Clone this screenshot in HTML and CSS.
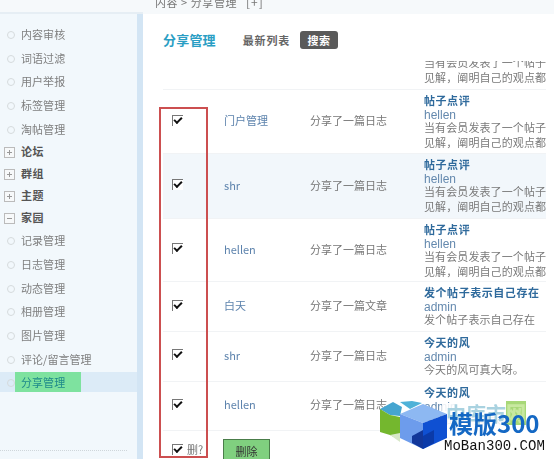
FILE: index.html
```html
<!DOCTYPE html>
<html lang="zh">
<head>
<meta charset="utf-8">
<title>分享管理</title>
<link rel="stylesheet" href="styles.css">
</head>
<body>
<div class="page">
  <aside class="side">
    <div class="side-top"></div>
    <nav class="menu">
      <a class="item">内容审核</a>
      <a class="item">词语过滤</a>
      <a class="item">用户举报</a>
      <a class="item">标签管理</a>
      <a class="item">淘帖管理</a>
      <a class="group"><i class="box plus"></i>论坛</a>
      <a class="group"><i class="box plus"></i>群组</a>
      <a class="group"><i class="box plus"></i>主题</a>
      <a class="group"><i class="box"></i>家园</a>
      <a class="item">记录管理</a>
      <a class="item">日志管理</a>
      <a class="item">动态管理</a>
      <a class="item">相册管理</a>
      <a class="item">图片管理</a>
      <a class="item">评论/留言管理</a>
      <a class="item active"><span class="mark">分享管理</span></a>
    </nav>
    <div class="dots"></div>
  </aside>
  <main class="main">
    <div class="crumb"><span>内容 &gt; 分享管理</span><span class="crumb-add">[+]</span></div>
    <header class="tabs">
      <h1 class="tab-title">分享管理</h1>
      <span class="tab">最新列表</span>
      <span class="tab-on">搜索</span>
    </header>
    <div class="list">
      <div class="row cut">
        <span class="cell-check ghost"><i class="check"></i></span><span class="name ghost">admin</span><span class="act"></span>
        <div class="detail"><p class="body">当有会员发表了一个帖子</p><p class="body">见解，阐明自己的观点都</p></div>
      </div>
      <div class="row tall">
        <span class="cell-check"><i class="check"></i></span><span class="name">门户管理</span><span class="act">分享了一篇日志</span>
        <div class="detail"><p class="title">帖子点评</p><p class="author">hellen</p><p class="body">当有会员发表了一个帖子</p><p class="body">见解，阐明自己的观点都</p></div>
      </div>
      <div class="row tall shade">
        <span class="cell-check"><i class="check"></i></span><span class="name">shr</span><span class="act">分享了一篇日志</span>
        <div class="detail"><p class="title">帖子点评</p><p class="author">hellen</p><p class="body">当有会员发表了一个帖子</p><p class="body">见解，阐明自己的观点都</p></div>
      </div>
      <div class="row tall-b">
        <span class="cell-check"><i class="check"></i></span><span class="name">hellen</span><span class="act">分享了一篇日志</span>
        <div class="detail"><p class="title">帖子点评</p><p class="author">hellen</p><p class="body">当有会员发表了一个帖子</p><p class="body">见解，阐明自己的观点都</p></div>
      </div>
      <div class="row">
        <span class="cell-check"><i class="check"></i></span><span class="name">白天</span><span class="act">分享了一篇文章</span>
        <div class="detail"><p class="title">发个帖子表示自己存在</p><p class="author">admin</p><p class="body">发个帖子表示自己存在</p></div>
      </div>
      <div class="row short">
        <span class="cell-check"><i class="check"></i></span><span class="name">shr</span><span class="act">分享了一篇日志</span>
        <div class="detail"><p class="title">今天的风</p><p class="author">admin</p><p class="body">今天的风可真大呀。</p></div>
      </div>
      <div class="row short">
        <span class="cell-check"><i class="check"></i></span><span class="name">hellen</span><span class="act">分享了一篇日志</span>
        <div class="detail"><p class="title">今天的风</p><p class="author">admin</p><p class="body">今天的风可真大呀。</p></div>
      </div>
      <div class="foot">
        <label class="del"><i class="check"></i>删?</label>
        <button class="btn" type="button">删除</button>
      </div>
    </div>
  </main>
  <div class="redbox"></div>
  <div class="wm">
    <svg class="wm-logo" viewBox="0 0 68 50" width="68" height="50" aria-hidden="true">
      <polygon points="0,9 13,2 22,7 20,16 10,15" fill="#45a5d0"/>
      <polygon points="0,9 10,15 20,17 20,40 10,35 0,32" fill="#74b72e"/>
      <polygon points="10,35 20,33 20,42" fill="#d8e8c8"/>
      <polygon points="20,2 32,1 42,3 30,9" fill="#4fb2d8"/>
      <polygon points="20,14 43,4 67,14 43,23" fill="#8db8f2"/>
      <polygon points="20,14 43,23 43,49 20,38" fill="#6d9cec"/>
      <polygon points="43,23 67,14 67,38 43,49" fill="#0f50d2"/>
      <polygon points="32,36 43,30 43,49 32,43" fill="#12379a"/>
      <polygon points="43,36 54,30 54,43 43,49" fill="#0b3aa8"/>
    </svg>
    <span class="wm-back">中库市<b class="wm-last">网</b></span>
    <span class="wm-cn">模版300</span>
    <span class="wm-en">MoBan300.COM</span>
  </div>
</div>
</body>
</html>
```
FILE: styles.css
```css
* { box-sizing: border-box; }
html, body { margin: 0; padding: 0; }
body {
  width: 554px;
  height: 459px;
  overflow: hidden;
  background: #fff;
  font-family: "Noto Sans CJK SC", "Liberation Sans", sans-serif;
  font-size: 11px;
  color: #666;
}
.page {
  position: relative;
  display: flex;
  width: 554px;
  height: 459px;
  overflow: hidden;
  filter: blur(0.45px);
}
.side {
  flex: 0 0 143px;
  height: 459px;
  background: #f2f8fc;
  border-right: 6px solid #d3e5f4;
}
.side-top {
  height: 14px;
  margin-right: -6px;
  background: #f6f9fb;
  border-bottom: 2px solid #e6eef4;
}
.menu { display: flex; flex-direction: column; padding-top: 8px; }
.item {
  position: relative;
  display: flex;
  align-items: center;
  height: 23.7px;
  padding-left: 21px;
  color: #7f7f7f;
  letter-spacing: 0.05px;
  white-space: nowrap;
}
.item::before {
  content: "";
  position: absolute;
  left: 7px;
  top: 50%;
  width: 6px;
  height: 6px;
  margin-top: -3px;
  border: 1px solid #d5dadc;
  border-radius: 50%;
}
.group {
  display: flex;
  align-items: center;
  gap: 6px;
  height: 22px;
  padding-left: 4px;
  font-weight: 700;
  color: #555;
  letter-spacing: 0.6px;
}
.box {
  position: relative;
  width: 11px;
  height: 11px;
  margin-top: 3px;
  border: 1px solid #bbb;
  background: #f7f9fa;
}
.box::before {
  content: "";
  position: absolute;
  left: 2px;
  top: 4px;
  width: 5px;
  height: 1px;
  background: #999;
}
.plus::after {
  content: "";
  position: absolute;
  left: 4px;
  top: 2px;
  width: 1px;
  height: 5px;
  background: #999;
}
.active {
  height: 20px;
  margin-top: 1px;
  padding-left: 15px;
  background: #dcebf7;
}
.mark {
  display: flex;
  align-items: center;
  width: 66px;
  height: 20px;
  padding-left: 6px;
  background: #7ee29f;
  color: #1f8a8a;
}
.dots {
  height: 1px;
  margin-top: 58px;
  margin-right: 10px;
  border-top: 1px dotted #cfd6da;
}
.main { flex: 1; min-width: 0; height: 459px; display: flex; flex-direction: column; }
.crumb {
  display: flex;
  align-items: flex-end;
  gap: 9px;
  height: 14px;
  padding: 0 0 5px 12px;
  background: #f6f9fb;
  box-shadow: 0 2px 0 #e6eef4;
  color: #777;
  line-height: 14px;
  overflow: hidden;
  flex: none;
  letter-spacing: 0.55px;
}
.crumb span { white-space: nowrap; }
.crumb-add { font-size: 12px; letter-spacing: 1px; }
.tabs {
  display: flex;
  align-items: center;
  height: 47px;
  flex: none;
  padding: 4px 0 0 20px;
  background: #fff;
}
.tab-title { margin: 0 27px 0 0; font-size: 13px; font-weight: 700; color: #2a9ec4; letter-spacing: 0.2px; }
.tab { margin-right: 10px; font-weight: 700; font-size: 11px; color: #666; letter-spacing: 0.8px; }
.tab-on {
  display: flex;
  align-items: center;
  justify-content: center;
  width: 38px;
  height: 18px;
  border-radius: 3px;
  background: #5a5a5a;
  color: #fff;
  font-weight: 700;
  letter-spacing: 0.6px;
}
.list { flex: 1; display: flex; flex-direction: column; overflow: hidden; margin-right: 8px; }
.row {
  display: grid;
  grid-template-columns: 52px 86px 114px 122px;
  align-items: center;
  height: 50px;
  flex: none;
  margin-left: 20px;
  padding: 0 0 3px 9px;
  border-bottom: 1px solid #f1f3f5;
  overflow: hidden;
}
.tall { height: 64px; }
.tall-b { height: 63px; }
.short { height: 49.5px; }
.shade { background: #f2f7fb; height: 65px; }
.cut { height: 29px; padding-bottom: 0; }
.cut .detail { align-self: end; padding: 0 0 4px; }
.ghost { align-self: start; margin-top: -14px; }
.cell-check { display: flex; align-items: center; }
.check {
  position: relative;
  display: inline-block;
  flex: none;
  width: 11px;
  height: 11px;
  border-top: 1px solid #777;
  border-left: 1px solid #777;
  background: #fff;
}
.check::after {
  content: "";
  position: absolute;
  left: 1px;
  top: 1px;
  width: 6px;
  height: 3px;
  border-left: 2px solid #111;
  border-bottom: 2px solid #111;
  transform: rotate(-45deg);
}
.name { color: #5d83ad; font-size: 11px; font-family: "Noto Sans CJK SC", "DejaVu Sans", sans-serif; }
.act { color: #777; white-space: nowrap; }
.detail { align-self: start; padding-top: 3px; overflow: hidden; white-space: nowrap; }
.detail p { margin: 0; }
.title { margin-bottom: 3px !important; line-height: 15px; font-weight: 700; color: #2f6a9c; letter-spacing: 0.55px; }
.author { line-height: 9px; color: #6489ae; font-family: "Liberation Sans", sans-serif; font-size: 12px; }
.body { line-height: 15px; color: #7a7a7a; letter-spacing: 0.1px; }
.foot {
  display: flex;
  align-items: flex-start;
  flex: 1;
  margin-left: 29px;
  padding-top: 8px;
}
.del { display: flex; align-items: center; gap: 4px; width: 51px; color: #777; margin-top: 3px; line-height: 14px; }
.btn {
  width: 47px;
  height: 24px;
  padding: 0;
  border: 1px solid #4a7d4a;
  background: #80d07f;
  color: #333;
  font: 11px "Noto Sans CJK SC", sans-serif;
}
.redbox {
  position: absolute;
  left: 159px;
  top: 107px;
  width: 49px;
  height: 351px;
  border: 2px solid #cc4f50;
}
.wm { position: absolute; left: 380px; top: 400px; width: 174px; height: 59px; }
.wm::before {
  content: "";
  position: absolute;
  left: 62px;
  top: 3px;
  width: 112px;
  height: 56px;
  background: rgba(255, 255, 255, 0.88);
}
.wm-logo { position: absolute; left: 0; top: 0; }
.wm-back {
  position: absolute;
  left: 66px;
  top: -2px;
  font-size: 20px;
  line-height: 32px;
  font-weight: 700;
  color: #a9d2e0;
  letter-spacing: 0;
  white-space: nowrap;
}
.wm-last { display: inline-block; background: #a8d878; color: #c8e8a0; line-height: 24px; vertical-align: top; margin-top: 3px; }
.wm-cn {
  position: absolute;
  left: 69px;
  top: 8px;
  font-size: 24px;
  line-height: 30px;
  font-weight: 700;
  color: #1468c4;
  white-space: nowrap;
}
.wm-en {
  position: absolute;
  left: 64px;
  top: 40px;
  font-family: "Liberation Mono", monospace;
  font-size: 14px;
  line-height: 13px;
  color: #111;
  letter-spacing: 0;
  white-space: nowrap;
}
```
